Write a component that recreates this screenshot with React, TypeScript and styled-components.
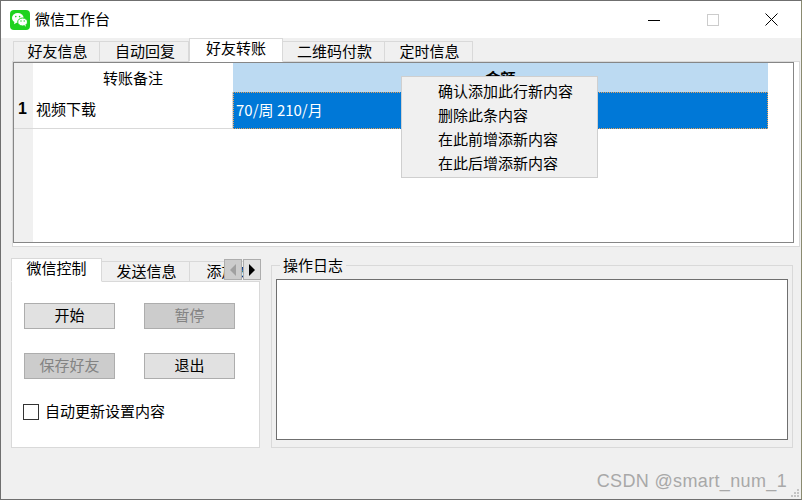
import React from "react";
import styled, { createGlobalStyle } from "styled-components";

const Global = createGlobalStyle`
  html, body { margin: 0; padding: 0; background: #f0f0f0; }
  * { box-sizing: border-box; }
`;

const Window = styled.div`
  width: 802px;
  height: 500px;
  border: 1px solid #6f6f6f;
  border-right-color: #8a8a70;
  background: #f0f0f0;
  display: flex;
  flex-direction: column;
  font-family: "Noto Sans CJK SC", "Liberation Sans", sans-serif;
  font-size: 15px;
  color: #000;
  position: relative;
  overflow: hidden;
`;

const TitleBar = styled.header`
  height: 37px;
  flex: none;
  background: #fff;
  display: flex;
  align-items: center;
  padding: 0 0 0 9px;
`;

const LogoSlot = styled.span`
  display: flex;
  margin-right: 5px;
`;

const TitleText = styled.span`
  font-size: 15px;
  line-height: 1;
  flex: 1;
  padding-bottom: 2px;
`;

const WindowControl = styled.button<{ $w: number }>`
  width: ${(p) => p.$w}px;
  height: 36px;
  padding: 0;
  border: 0;
  background: transparent;
  display: flex;
  align-items: center;
  justify-content: center;
`;

const TopArea = styled.section`
  padding: 0 1px 0 11px;
  height: 209px;
  flex: none;
  display: flex;
  flex-direction: column;
`;

const TabStrip = styled.div`
  display: flex;
  align-items: flex-end;
  height: 24px;
  flex: none;
  padding-left: 1px;
  position: relative;
  z-index: 1;
  margin-bottom: -1px;
`;

const Tab = styled.div<{ $w: number; $active?: boolean }>`
  width: ${(p) => p.$w}px;
  flex: none;
  height: ${(p) => (p.$active ? 24 : 21)}px;
  background: ${(p) => (p.$active ? "#fff" : "#f0f0f0")};
  border: 1px solid #d9d9d9;
  border-left-width: ${(p) => (p.$active ? 1 : 0)}px;
  border-bottom-color: ${(p) => (p.$active ? "#fff" : "#d9d9d9")};
  display: flex;
  align-items: center;
  justify-content: center;
  padding-bottom: ${(p) => (p.$active ? 5 : 3)}px;
  padding-left: ${(p) => (p.$active ? 0 : 2)}px;
  line-height: 1;
  white-space: nowrap;
  overflow: hidden;
  &:first-child { border-left-width: 1px; }
`;

const TopPane = styled.div`
  height: 186px;
  border: 1px solid #d9d9d9;
  background: #fff;
  padding: 0 5px 3px 0;
  display: flex;
`;

const Table = styled.div`
  flex: 1;
  border: 1px solid #868686;
  background: #fff;
  display: grid;
  grid-template-columns: 19px 200px 535px 1fr;
  grid-template-rows: 29px 37px 1fr;
`;

const HeaderCorner = styled.div`
  background: #f0f0f0;
  grid-row: 1 / 4;
  display: grid;
  grid-template-rows: 29px 37px 1fr;
`;

const RowNumber = styled.div`
  grid-row: 2;
  display: flex;
  align-items: center;
  justify-content: center;
  font-family: "Liberation Sans", sans-serif;
  font-weight: 700;
  font-size: 16px;
  border-bottom: 1px solid #d9d9d9;
  padding: 0 2px 2px 0;
`;

const ColumnHead = styled.div<{ $selected?: boolean }>`
  background: ${(p) => (p.$selected ? "#bcdaf2" : "#fff")};
  display: flex;
  align-items: center;
  justify-content: center;
  line-height: 1;
  font-weight: ${(p) => (p.$selected ? 700 : 400)};
`;

const Spacer = styled.div``;

const Cell = styled.div`
  padding-left: 3px;
  display: flex;
  align-items: center;
  border-bottom: 1px solid #d9d9d9;
  border-right: 1px solid #d9d9d9;
  padding-bottom: 3px;
  line-height: 1;
  white-space: nowrap;
`;

const SelectedCell = styled.div`
  background: #0078d7;
  color: #fff;
  outline: 1px dotted #e8a25a;
  outline-offset: -1px;
  padding-left: 3px;
  padding-bottom: 3px;
  display: flex;
  align-items: center;
  line-height: 1;
  white-space: nowrap;
`;

const Menu = styled.div`
  position: absolute;
  left: 400px;
  top: 75px;
  width: 197px;
  height: 102px;
  background: #f0f0f0;
  border: 1px solid #cfcfcf;
  padding: 1px 0;
  z-index: 5;
`;

const MenuItem = styled.div`
  height: 24px;
  padding-left: 36px;
  display: flex;
  align-items: center;
  line-height: 1;
`;

const BottomArea = styled.section`
  flex: 1;
  display: flex;
  padding: 11px 8px 0 10px;
  gap: 11px;
  align-items: flex-start;
`;

const LeftTabs = styled.div`
  width: 249px;
  height: 190px;
  flex: none;
  display: flex;
  flex-direction: column;
  position: relative;
`;

const LeftStrip = styled.div`
  display: flex;
  align-items: flex-end;
  height: 24px;
  flex: none;
  overflow: hidden;
  position: relative;
  z-index: 1;
  margin-bottom: -1px;
`;

const ScrollArrows = styled.div`
  position: absolute;
  left: 213px;
  top: 1px;
  display: flex;
  gap: 1px;
  z-index: 2;
`;

const ArrowButton = styled.div<{ $disabled?: boolean }>`
  width: 18px;
  height: 21px;
  background: ${(p) => (p.$disabled ? "#cccccc" : "#e1e1e1")};
  border: 1px solid #adadad;
  display: flex;
  align-items: center;
  justify-content: center;
`;

const LeftPane = styled.div`
  flex: 1;
  background: #fff;
  border: 1px solid #d9d9d9;
  padding: 21px 24px 0 12px;
`;

const ButtonGrid = styled.div`
  display: grid;
  grid-template-columns: 91px 91px;
  grid-auto-rows: 26px;
  column-gap: 29px;
  row-gap: 24px;
`;

const Btn = styled.button<{ $disabled?: boolean }>`
  font: inherit;
  padding: 0 0 3px;
  line-height: 1;
  background: ${(p) => (p.$disabled ? "#cccccc" : "#e1e1e1")};
  color: ${(p) => (p.$disabled ? "#838383" : "#000")};
  border: 1px solid #adadad;
`;

const CheckRow = styled.label`
  display: flex;
  align-items: center;
  gap: 6px;
  margin-top: 24px;
  margin-left: -1px;
  line-height: 1;
`;

const CheckBox = styled.span`
  width: 16px;
  height: 16px;
  border: 1px solid #333;
  background: #fff;
  flex: none;
`;

const CheckLabel = styled.span`
  padding-bottom: 2px;
`;

const LogGroup = styled.fieldset`
  flex: 1;
  height: 190px;
  margin: 0;
  padding: 7px 4px 6px 4px;
  border: 1px solid #d9d9d9;
  min-width: 0;
  display: flex;
`;

const LogLegend = styled.legend`
  margin-left: 4px;
  padding: 0 3px;
  line-height: 14px;
  height: 14px;
  font-size: 15px;
`;

const LogBox = styled.div`
  width: 100%;
  height: 161px;
  background: #fff;
  border: 1px solid #6f6f6f;
`;

const Watermark = styled.div`
  position: absolute;
  right: 14px;
  bottom: 9px;
  font-family: "Liberation Sans", sans-serif;
  font-size: 18px;
  letter-spacing: 0.35px;
  line-height: 1;
  color: #a8a8a8;
`;

const Grip = styled.svg`
  position: absolute;
  right: 1px;
  bottom: 1px;
`;

const WeChatLogo = () => (
  <svg width="20" height="20" viewBox="0 0 20 20">
    <rect width="20" height="20" rx="4" fill="#1ed21e" />
    <ellipse cx="7.8" cy="8" rx="5.8" ry="4.9" fill="#fff" />
    <path d="M4.5 11.5 L4 14.3 L7 12.6 Z" fill="#fff" />
    <ellipse cx="12.6" cy="12" rx="4.9" ry="4" fill="#fff" stroke="#1ed21e" strokeWidth="1" />
    <path d="M14.6 15.2 L15.8 17 L15.6 14.6 Z" fill="#fff" />
    <circle cx="5.8" cy="6.6" r="0.8" fill="#1ed21e" />
    <circle cx="9.6" cy="6.6" r="0.8" fill="#1ed21e" />
    <circle cx="11" cy="11" r="0.7" fill="#1ed21e" />
    <circle cx="14.2" cy="11" r="0.7" fill="#1ed21e" />
  </svg>
);

export default function App() {
  return (
    <Window>
      <Global />
      <TitleBar>
        <LogoSlot>
          <WeChatLogo />
        </LogoSlot>
        <TitleText>微信工作台</TitleText>
        <WindowControl $w={58}>
          <svg width="12" height="12" viewBox="0 0 12 12">
            <path d="M0 6.5 H12" stroke="#000" strokeWidth="1" />
          </svg>
        </WindowControl>
        <WindowControl $w={59}>
          <svg width="12" height="12" viewBox="0 0 12 12">
            <rect x="0.5" y="0.5" width="11" height="11" fill="none" stroke="#cccccc" />
          </svg>
        </WindowControl>
        <WindowControl $w={59}>
          <svg width="13" height="13" viewBox="0 0 13 13">
            <path d="M0.5 0.5 L12.5 12.5 M12.5 0.5 L0.5 12.5" stroke="#000" strokeWidth="1" />
          </svg>
        </WindowControl>
      </TitleBar>

      <TopArea>
        <TabStrip>
          <Tab $w={87}>好友信息</Tab>
          <Tab $w={89}>自动回复</Tab>
          <Tab $w={94} $active>好友转账</Tab>
          <Tab $w={102}>二维码付款</Tab>
          <Tab $w={88}>定时信息</Tab>
        </TabStrip>
        <TopPane>
          <Table>
            <HeaderCorner>
              <RowNumber>1</RowNumber>
            </HeaderCorner>
            <ColumnHead>转账备注</ColumnHead>
            <ColumnHead $selected>金额</ColumnHead>
            <Spacer />
            <Cell>视频下载</Cell>
            <SelectedCell>70/周 210/月</SelectedCell>
          </Table>
        </TopPane>
      </TopArea>

      <Menu>
        <MenuItem>确认添加此行新内容</MenuItem>
        <MenuItem>删除此条内容</MenuItem>
        <MenuItem>在此前增添新内容</MenuItem>
        <MenuItem>在此后增添新内容</MenuItem>
      </Menu>

      <BottomArea>
        <LeftTabs>
          <LeftStrip>
            <Tab $w={91} $active>微信控制</Tab>
            <Tab $w={88}>发送信息</Tab>
            <Tab $w={92}>添加好友</Tab>
          </LeftStrip>
          <ScrollArrows>
            <ArrowButton $disabled>
              <svg width="8" height="12" viewBox="0 0 8 12">
                <path d="M7 0 L1 6 L7 12 Z" fill="#a0a0a0" />
              </svg>
            </ArrowButton>
            <ArrowButton>
              <svg width="8" height="12" viewBox="0 0 8 12">
                <path d="M1 0 L7 6 L1 12 Z" fill="#000" />
              </svg>
            </ArrowButton>
          </ScrollArrows>
          <LeftPane>
            <ButtonGrid>
              <Btn>开始</Btn>
              <Btn $disabled>暂停</Btn>
              <Btn $disabled>保存好友</Btn>
              <Btn>退出</Btn>
            </ButtonGrid>
            <CheckRow>
              <CheckBox />
              <CheckLabel>自动更新设置内容</CheckLabel>
            </CheckRow>
          </LeftPane>
        </LeftTabs>

        <LogGroup>
          <LogLegend>操作日志</LogLegend>
          <LogBox />
        </LogGroup>
      </BottomArea>

      <Watermark>CSDN @smart_num_1</Watermark>
      <Grip width="10" height="10" viewBox="0 0 10 10">
        <path d="M7 1h2v2H7zM4 4h2v2H4zM7 4h2v2H7zM1 7h2v2H1zM4 7h2v2H4zM7 7h2v2H7z" fill="#c4c4c4" />
      </Grip>
    </Window>
  );
}
